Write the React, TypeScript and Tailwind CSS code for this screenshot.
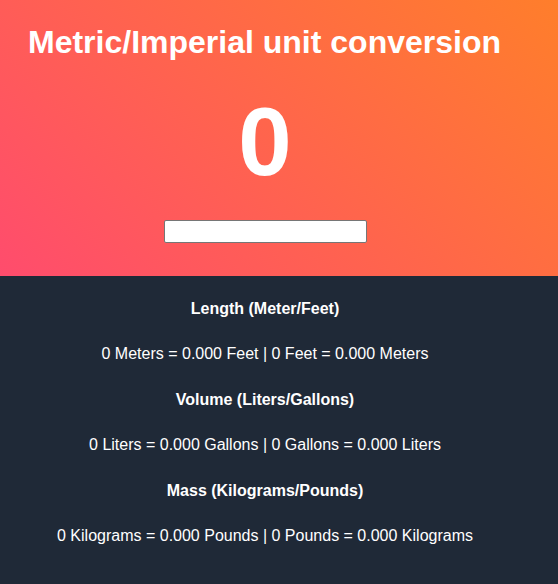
import React, { useState } from 'react';

const fmt = (n: number) => n.toFixed(3);

const App: React.FC = () => {
  const [value, setValue] = useState('');
  const num = Number(value) || 0;

  const rows = [
    {
      title: 'Length (Meter/Feet)',
      text: `${num} Meters = ${fmt(num * 3.281)} Feet | ${num} Feet = ${fmt(num / 3.281)} Meters`,
    },
    {
      title: 'Volume (Liters/Gallons)',
      text: `${num} Liters = ${fmt(num * 0.264)} Gallons | ${num} Gallons = ${fmt(num / 0.264)} Liters`,
    },
    {
      title: 'Mass (Kilograms/Pounds)',
      text: `${num} Kilograms = ${fmt(num * 2.204)} Pounds | ${num} Pounds = ${fmt(num / 2.204)} Kilograms`,
    },
  ];

  return (
    <div className="min-h-[584px] w-full bg-[#1f2937] font-['Liberation_Sans',Arial,sans-serif] text-white">
      <header className="flex h-[276px] flex-col bg-[linear-gradient(45deg,#ff4c6d,#ff7e2b)] pl-[28px] pr-[56px] pt-[26px]">
        <h1 className="text-[32px] font-bold leading-[32px]">Metric/Imperial unit conversion</h1>
        <div className="mt-[36px] text-center text-[96px] font-bold leading-[96px]">{num}</div>
        <div className="mt-[30px] flex justify-center">
          <input
            type="number"
            value={value}
            onChange={(e) => setValue(e.target.value)}
            className="h-[23px] w-[203px] rounded-[2px] border border-[#767676] bg-white px-[2px] text-[13px] text-black outline-none"
          />
        </div>
      </header>
      <section className="flex flex-col gap-[25.4px] pl-[28px] pr-[56px] pt-[23px] pb-[40px] text-center text-[16px] leading-[20px]">
        {rows.map((r) => (
          <React.Fragment key={r.title}>
            <h2 className="font-bold">{r.title}</h2>
            <p>{r.text}</p>
          </React.Fragment>
        ))}
      </section>
    </div>
  );
};

export default App;
